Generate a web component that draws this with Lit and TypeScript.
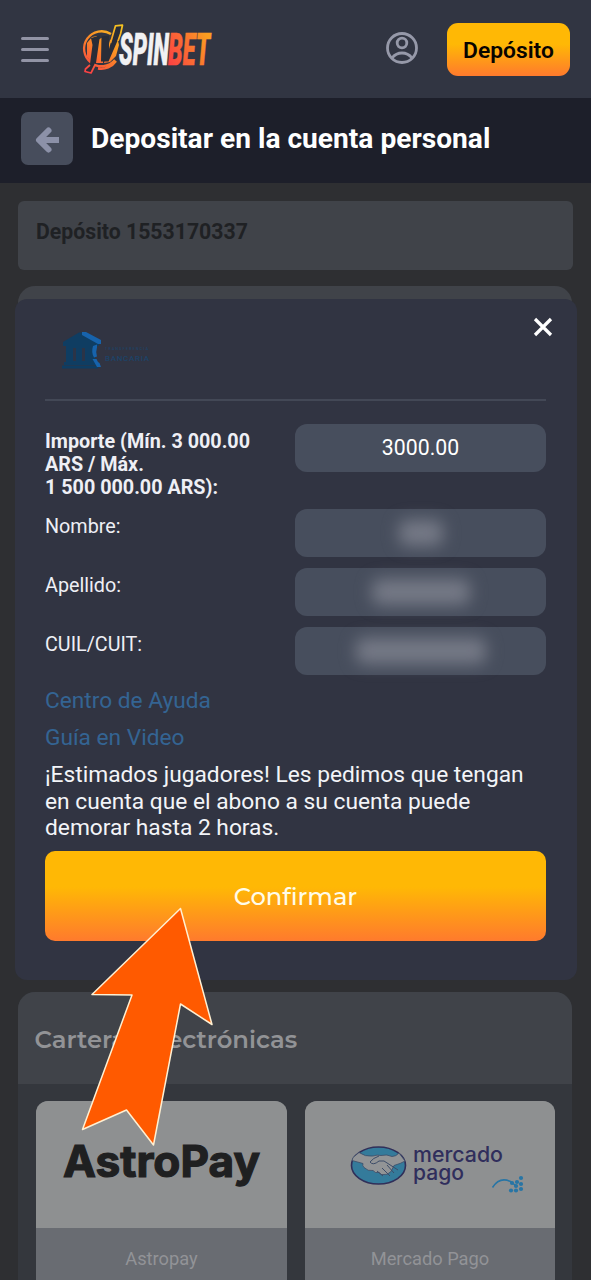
import { LitElement, html, css, svg } from "lit";
import { customElement, property } from "lit/decorators.js";

@customElement("jv-logo")
class JvLogo extends LitElement {
  static styles = css`
    :host { display: block; }
    .logo { display: block; overflow: visible; }
    .word { font: italic 900 34px "Roboto", sans-serif; }
  `;
  render() {
    return html`<svg class="logo" width="132" height="52" viewBox="81 23 132 52">
      <defs>
        <linearGradient id="ring" gradientUnits="userSpaceOnUse" x1="86" y1="70" x2="120" y2="26">
          <stop offset="0" stop-color="#fa4245" /><stop offset=".5" stop-color="#fb8a26" /><stop offset="1" stop-color="#f6c321" />
        </linearGradient>
        <linearGradient id="bet" gradientUnits="userSpaceOnUse" x1="0" y1="0" x2="38" y2="-24">
          <stop offset="0" stop-color="#fb3f44" /><stop offset=".5" stop-color="#fa6b33" /><stop offset="1" stop-color="#fa9f20" />
        </linearGradient>
      </defs>
      <path d="M115 60A17.500 17.500 0 1 1 111 34M98 68.500A18 18 0 0 0 116 61" fill="none" stroke="url(#ring)" stroke-width="2.300" />
      <path d="M87 43 92 37 97 36 91 62 87 57ZM98 40 103 37 103 63H95ZM110 40 117 37 119 45 116 56 110 62 104 63Z" fill="url(#ring)" />
      <path d="M91 38 100 35.500 96 63 91.500 73 84.500 71 86.500 67.500 90 64 92.500 45Z" fill="#292d38" />
      <path d="M90 65 85.500 69 85 71.500 91 73 95.500 64" fill="none" stroke="url(#ring)" stroke-width="1.700" stroke-linejoin="round" />
      <path d="M101.500 36.500 109 35.500 109 49 115.500 26 122.500 25.500 120 35 108.500 61.500 101 61.500Z" fill="#292d38" />
      <path d="M110.500 43 115.500 25.800 122.500 25.200 120.500 34 118 41" fill="none" stroke="url(#ring)" stroke-width="1.700" stroke-linejoin="round" />
      <g transform="translate(119 65) scale(1 1.320)"><text class="word" fill="#f1f1f3" stroke="#f1f1f3" stroke-width=".4" textLength="50" lengthAdjust="spacingAndGlyphs">SPIN</text></g>
      <g transform="translate(168 65) scale(1 1.320)"><text class="word" fill="url(#bet)" stroke="url(#bet)" stroke-width=".4" textLength="42" lengthAdjust="spacingAndGlyphs">BET</text></g>
    </svg>`;
  }
}

@customElement("form-row")
class FormRow extends LitElement {
  @property() label = "";
  @property() value = "";
  @property({ type: Number }) mask = 0;
  @property({ type: Boolean, reflect: true }) strong = false;
  static styles = css`
    :host { display: grid; grid-template-columns: 250px 251px; align-items: start; height: 59px; font: 400 19.750px/23px "Roboto", sans-serif; color: #eeeff5; }
    :host([strong]) { height: 85px; font-weight: 700; }
    .label { padding-top: 6px; white-space: pre-line; }
    .field { box-sizing: border-box; height: 48px; padding-bottom: 1px; border-radius: 12px; background: #474e5d; display: flex; align-items: center; justify-content: center; font-weight: 400; font-size: 21.250px; color: #fff; }
    .mask { height: 26px; border-radius: 8px; background: #757986; filter: blur(8px); }
  `;
  render() {
    return html`<div class="label">${this.label}</div>
      <div class="field">${this.value ? this.value : html`<span class="mask" style="width:${this.mask}px"></span>`}</div>`;
  }
}

@customElement("app-root")
class AppRoot extends LitElement {
  static styles = css`
    :host { display: block; position: relative; width: 591px; height: 1280px; overflow: hidden; background: #2e2f32; font-family: "Roboto", sans-serif; }
    header { box-sizing: border-box; height: 98px; padding: 0 21px; background: #313542; display: flex; align-items: center; }
    .menu { width: 28px; height: 25px; display: flex; flex-direction: column; justify-content: space-between; }
    .menu i { display: block; height: 3px; border-radius: 2px; background: #9294a5; }
    jv-logo { margin-left: 32px; }
    .user { margin-left: auto; margin-right: 29px; margin-top: -2px; }
    .deposit { box-sizing: border-box; width: 123px; height: 53px; padding-top: 2px; border-radius: 11px; background: linear-gradient(#ffb805 40%, #ff7a2d); display: flex; align-items: center; justify-content: center; font-weight: 600; font-size: 22.800px; color: #080400; }
    .title { height: 85px; background: #1d1f2a; display: flex; align-items: center; padding-left: 21px; gap: 18px; }
    .back { width: 52px; height: 53px; margin-top: -4px; border-radius: 7px; background: #474d5c; display: grid; place-items: center; }
    .back svg { margin-top: 2px; }
    h1 { margin: -3px 0 0; font-size: 28.150px; line-height: 34px; font-weight: 700; color: #fff; white-space: nowrap; }
    .page { padding: 18px 19px 0 18px; display: flex; flex-direction: column; }
    .account { box-sizing: border-box; height: 69px; width: 555px; border-radius: 6px; background: #404349; padding: 18px; font-weight: 700; font-size: 21.250px; line-height: 26px; color: #1f2124; }
    .panel { border-radius: 17px 17px 0 0; background: #404349; }
    .first { margin-top: 16px; height: 660px; }
    .wallets { margin-top: 46px; height: 300px; background: #34373d; overflow: hidden; }
    .wallets h2 { margin: 0; height: 92px; box-sizing: border-box; padding: 34px 16.500px; background: #404349; font: 600 24.250px/28px "Montserrat", "Inter", sans-serif; color: #929396; white-space: nowrap; }
    .tiles { display: grid; grid-template-columns: 251px 250px; gap: 18px; padding: 17px 18px; }
    .tile { height: 220px; border-radius: 12px; overflow: hidden; background: #696c72; text-align: center; font-size: 18.300px; line-height: 62px; color: #929397; }
    .art { display: block; width: 100%; height: 127px; background: #8e9091; }
    .modal { position: absolute; left: 15px; top: 299px; width: 562px; height: 681px; box-sizing: border-box; border-radius: 12px; background: #313442; padding: 0 31px 0 30px; }
    .top { box-sizing: border-box; height: 102px; border-bottom: 2px solid #434856; display: flex; justify-content: space-between; margin-bottom: 23px; }
    .bank { margin: 31px 0 0 16px; }
    .close { margin: 18px -7px 0 0; }
    .links { margin-top: -4.500px; }
    .link { display: block; font-size: 22.700px; line-height: 37px; color: #346493; }
    p { margin: 6.500px 0 0; font-size: 22.750px; line-height: 26.500px; color: #f3f4f8; white-space: pre-line; }
    .confirm { box-sizing: border-box; padding-top: 1px; margin-top: 9px; height: 90.500px; border-radius: 10px; background: linear-gradient(#ffb805 40%, #ff7a2d); display: flex; align-items: center; justify-content: center; font: 500 24.200px "Montserrat", "Inter", sans-serif; color: #fffce9; }
    .arrow { position: absolute; left: 78px; top: 904px; }
    .astro { font: 700 44px "Inter", sans-serif; }
    .mp { font: 500 21px/16px "Inter", sans-serif; }
    .inc { font: 500 8px "Roboto", sans-serif; }
    .inc-small { font: 500 3.500px "Roboto", sans-serif; }
  `;

  bank() {
    return html`<svg class="bank" width="92" height="42" viewBox="61 329 92 42">
      <path d="M63 341 79 331.500 83 331.500 99 341v4H63ZM66 345h29v16H66ZM64 361h32v3H64ZM62 364.500h36v3H62Z" fill="#0f3d62" />
      <path d="M74.500 347v13M83.500 347v13" stroke="#2b3447" stroke-width="3" />
      <path d="M82 331h4l15 8v4h-3l-16-9ZM93 345l4-1.500v3q-1.500 4 0 9l-3 1q-3-5-1-11.500ZM92.500 358h4l1.500 3 1.500 1 1.500 4h-4Z" fill="#1763ac" />
      <text class="inc-small" x="105" y="349" fill="#1d4368" textLength="43">TRANSFERENCIA</text>
      <text class="inc" x="105" y="359.500" fill="#1d4368" textLength="44">BANCARIA</text>
    </svg>`;
  }

  mercado() {
    return html`<svg class="art" viewBox="305 1101 250 127">
      <ellipse cx="378.500" cy="1165.500" rx="27" ry="18.500" fill="#347b9b" stroke="#302f59" stroke-width="1.600" />
      <path d="M353 1157.500 359 1152.500q6 4.500 14 3.500 4-1.500 8-.500 6-1.500 11 1 4 0 7-3.500l6 8q-4 2.500-11 4.500l-3 6q-4 4-7 3-3 1-5-2-4 1-6-2-5 1-9-3-2-2-1-4l-11-3Z" fill="#929496" stroke="#3c4c68" stroke-width=".8" />
      <path d="M379 1156q-6 2-9 6 3 4 9-1h5l14 9M382 1168l8 8M377 1171l6 5M387 1165l7 8" fill="none" stroke="#3c4c68" stroke-width="1" />
      <text class="mp" x="413" y="1162" fill="#302e5c" textLength="90" lengthAdjust="spacingAndGlyphs">mercado</text>
      <text class="mp" x="413" y="1179.500" fill="#302e5c" textLength="51" lengthAdjust="spacingAndGlyphs">pago</text>
      <path d="M492.500 1187.500q7-11 18-6l5 4" fill="none" stroke="#2875a5" stroke-width="1.600" />
      ${[[512,1183],[516,1186],[521,1178],[521,1184],[517,1182],[521,1189],[511,1190.500],[516,1190.500]].map(([x, y]) => svg`<circle cx=${x} cy=${y} r="2.100" fill="#2875a5" />`)}
    </svg>`;
  }

  render() {
    return html`
      <header>
        <div class="menu"><i></i><i></i><i></i></div>
        <jv-logo></jv-logo>
        <svg class="user" width="32" height="32" viewBox="0 0 32 32" fill="none" stroke="#9699a9" stroke-width="2.800">
          <circle cx="16" cy="16" r="14.500" /><circle cx="16" cy="11" r="4.800" /><path d="M6 26q4-5 10-5t10 5" />
        </svg>
        <div class="deposit">Depósito</div>
      </header>
      <div class="title">
        <div class="back"><svg width="26" height="28" viewBox="0 0 26 28" fill="none" stroke="#8c91a8" stroke-width="6"><path d="M25 14H6" /><path d="M14.500 4.500 5 14l9.500 9.500" stroke-linecap="round" stroke-linejoin="round" /></svg></div>
        <h1>Depositar en la cuenta personal</h1>
      </div>
      <div class="page">
        <div class="account">Depósito 1553170337</div>
        <div class="panel first"></div>
        <div class="panel wallets">
          <h2>Carteras electrónicas</h2>
          <div class="tiles">
            <div class="tile"><svg class="art" viewBox="36 1101 251 127"><text class="astro" x="63" y="1177" fill="#1f2021" stroke="#1f2021" stroke-width="1.200" textLength="197" lengthAdjust="spacingAndGlyphs">AstroPay</text></svg>Astropay</div>
            <div class="tile">${this.mercado()}Mercado Pago</div>
          </div>
        </div>
      </div>
      <div class="modal">
        <div class="top">${this.bank()}
          <svg class="close" width="20" height="20" viewBox="0 0 20 20"><path d="M2 2 18 18M18 2 2 18" stroke="#fff" stroke-width="3.200" /></svg>
        </div>
        <form-row strong label=${"Importe (Mín. 3 000.00\nARS / Máx.\n1 500 000.00 ARS):"} value="3000.00"></form-row>
        <form-row label="Nombre:" .mask=${44}></form-row>
        <form-row label="Apellido:" .mask=${98}></form-row>
        <form-row label="CUIL/CUIT:" .mask=${130}></form-row>
        <div class="links">
          <a class="link">Centro de Ayuda</a>
          <a class="link">Guía en Video</a>
        </div>
        <p>${"¡Estimados jugadores! Les pedimos que tengan\nen cuenta que el abono a su cuenta puede\ndemorar hasta 2 horas."}</p>
        <div class="confirm">Confirmar</div>
      </div>
      <svg class="arrow" width="138" height="246" viewBox="78 904 138 246">
        <path d="M180.500 908.500 92 994.500 132 995 82.500 1129.500 126.500 1110 153.500 1145 180.500 1004 212 1024.500Z" fill="#ff5a00" stroke="#fff0d2" stroke-width="1.500" stroke-linejoin="round" />
      </svg>`;
  }
}
